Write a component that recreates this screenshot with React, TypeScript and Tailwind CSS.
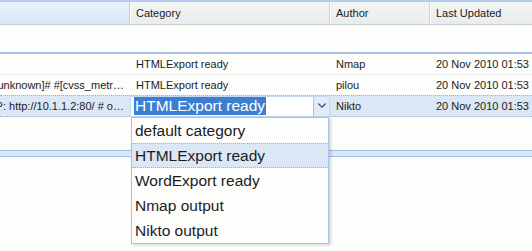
const FONT = { fontFamily: '"Liberation Sans", Arial, sans-serif' };

const ROWS = [
  { title: '', category: 'HTMLExport ready', author: 'Nmap', updated: '20 Nov 2010 01:53' },
  { title: '[unknown]# #[cvss_metr…', category: 'HTMLExport ready', author: 'pilou', updated: '20 Nov 2010 01:53' },
];

const OPTIONS = ['default category', 'HTMLExport ready', 'WordExport ready', 'Nmap output', 'Nikto output'];

function ChevronDown() {
  return (
    <svg width="10" height="6" viewBox="0 0 10 6" className="text-[#27508f]">
      <path d="M0.5 0.5 L5 5 L9.5 0.5 L7.8 0.5 L5 3.2 L2.2 0.5 Z" fill="currentColor" />
    </svg>
  );
}

function HeaderCell({ label, width, active }: { label: string; width: string; active?: boolean }) {
  return (
    <div
      className={`flex h-full shrink-0 items-center border-r pl-[6px] ${width} ${
        active
          ? 'border-r-[#b7cdec] bg-gradient-to-b from-[#e9f2fd] to-[#d5e5fa]'
          : 'border-r-[#d2d5d5] bg-gradient-to-b from-[#f3f5f5] to-[#e9ecec] shadow-[inset_1px_0_0_#ffffff]'
      }`}
    >
      {label}
    </div>
  );
}

export default function App() {
  return (
    <div className="relative h-[251px] w-[532px] overflow-hidden bg-[#fdfdfb] text-[11px] text-[#1c1c1c]" style={FONT}>
      {/* column header */}
      <div className="flex h-[25px] border-t-2 border-b border-t-[#b3cbee] border-b-[#c9cccc]">
        <HeaderCell label="" width="w-[130px]" active />
        <HeaderCell label="Category" width="w-[200px]" />
        <HeaderCell label="Author" width="w-[100px]" />
        <HeaderCell label="Last Updated" width="flex-1 border-r-0" />
      </div>

      <div className="h-[27px]" />
      <div className="h-[2px] bg-[#a9c5ea]" />

      {ROWS.map((r, i) => (
        <div key={i} className="flex h-[21px] items-center border-b border-[#ececea]">
          <div className="flex w-[130px] shrink-0 justify-end overflow-hidden whitespace-nowrap pr-[6px]">{r.title}</div>
          <div className="w-[200px] shrink-0 pl-[6px]">{r.category}</div>
          <div className="w-[100px] shrink-0 pl-[6px]">{r.author}</div>
          <div className="flex-1 pl-[6px] whitespace-nowrap">{r.updated}</div>
        </div>
      ))}

      {/* selected row, category being edited */}
      <div className="-mt-px flex h-[22px] items-center border-y border-dotted border-[#93b3e0] bg-[#dce7f6]">
        <div className="flex w-[130px] shrink-0 justify-end overflow-hidden whitespace-nowrap pr-[6px]">
          IP: http://10.1.1.2:80/ # o…
        </div>
        <div className="flex h-[21px] w-[200px] shrink-0 items-stretch border border-[#c6d8f1] bg-white pl-[3px]">
          <div className="flex flex-1 items-center overflow-hidden py-px">
            <span className="bg-[#3b7fd2] px-px text-[15.5px] leading-[18px] text-white">HTMLExport ready</span>
          </div>
          <div className="flex w-[16px] items-center justify-center border-l border-[#a9c4e9] bg-[#e2ecf9]">
            <ChevronDown />
          </div>
        </div>
        <div className="w-[100px] shrink-0 pl-[6px]">Nikto</div>
        <div className="flex-1 pl-[6px] whitespace-nowrap">20 Nov 2010 01:53</div>
      </div>

      <div className="h-[33px]" />
      <div className="h-[7px] border-y border-[#9fbde6] bg-[#dde8f6]" />

      {/* dropdown list */}
      <div className="absolute left-[131px] top-[117px] w-[198px] border border-[#a6c2e8] bg-[#fdfdfb] text-[15.5px] shadow-[2px_1px_3px_rgba(0,0,0,0.18)]">
        {OPTIONS.map((o) => (
          <div
            key={o}
            className={`flex h-[25px] items-center pl-[3px] ${
              o === 'HTMLExport ready' ? 'border-y border-dotted border-[#93b3e0] bg-[#dce7f6]' : ''
            }`}
          >
            {o}
          </div>
        ))}
      </div>
    </div>
  );
}
